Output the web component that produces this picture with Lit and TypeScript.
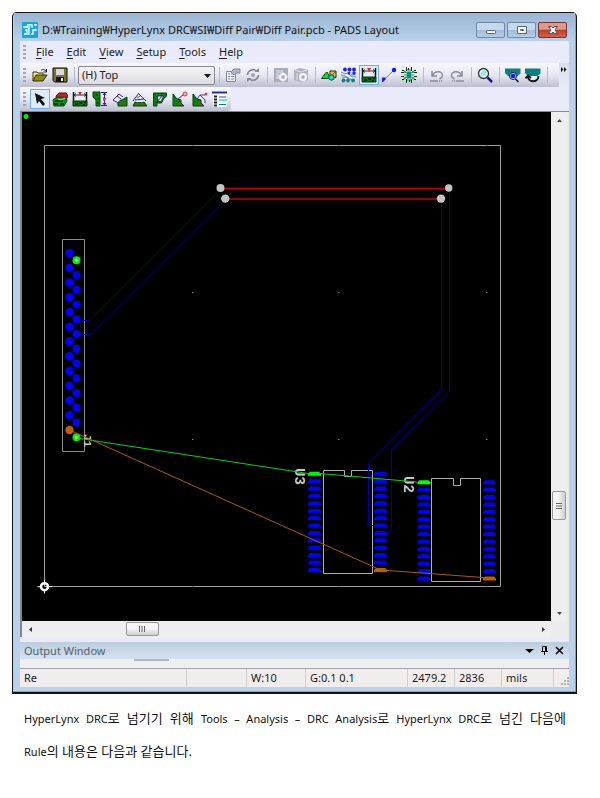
import { LitElement, html, svg, css } from "lit";
import { customElement } from "lit/decorators.js";
import { classMap } from "lit/directives/class-map.js";

/* Icons are drawn on a 16 x 16 grid. */
const icons: Record<string, unknown> = {
  logo: svg`<rect width="16" height="16" rx="1" fill="#16a8dc"/><path d="M1 5h4M3 8h2v4H2M7 3v10M5 3h5v3M9 12h2V8h3M12 3h3" stroke="#fff" stroke-width="1.3" fill="none"/><circle cx="5" cy="5" r="1.2" fill="#fff"/><circle cx="13.500" cy="8" r="1.200" fill="#fff"/>`,
  open: svg`<path d="M1 14V5h4l1 1h5v2" fill="#f4ec70" stroke="#3a3a10"/><path d="M1 14l3-6h11l-4 6z" fill="#8a8a10" stroke="#2c2c0c"/><path d="M9 3.500c2-2 4-1 5 1M14.500 2v3h-3" fill="none" stroke="#222"/>`,
  save: svg`<path d="M1 1h14v14H2.500L1 13.500z" fill="#77772a" stroke="#111"/><rect x="4" y="2" width="8" height="6" fill="#d9d9e4"/><rect x="4" y="10" width="8" height="5" fill="#111"/><rect x="9" y="11" width="2" height="3" fill="#eee"/>`,
  props: svg`<path d="M1.500 4.500h9v10h-9z" fill="#eceef4" stroke="#858a98"/><path d="M3 7h2M6 7h3M3 9.500h2M6 9.500h3M3 12h2M6 12h3" stroke="#858a98"/><path d="M6 5l3-3h6v4h-3l-3 2z" fill="#b2b6c2" stroke="#858a98"/>`,
  cycle: svg`<path d="M2.500 8a5.500 5.500 0 0 1 9-4M13.500 8a5.500 5.500 0 0 1-9 4" fill="none" stroke="#858a98" stroke-width="1.600"/><path d="M9.500 5h4.500V1zM6.500 11H2v4z" fill="#858a98"/><circle cx="8" cy="8" r="2" fill="#a2a6b2"/>`,
  gearA: svg`<rect x="1" y="1" width="14" height="14" fill="#a7abba"/><path d="M3 3h7v3H6v6H3z" fill="#c7cad5"/><circle cx="10" cy="10" r="3" fill="none" stroke="#f3f4f8" stroke-width="2"/><path d="M10 5v10M5 10h10" stroke="#f3f4f8"/><circle cx="10" cy="10" r="1.500" fill="#a7abba"/>`,
  gearB: svg`<path d="M1 3l6-2 8 2v10l-7 2-7-2z" fill="#b0b3c1"/><path d="M2 3l6 2 6-2M4 6v7" stroke="#dcdee6" fill="none"/><circle cx="10" cy="10" r="3" fill="none" stroke="#f3f4f8" stroke-width="2"/><path d="M10 6v8M6 10h8" stroke="#f3f4f8"/><circle cx="10" cy="10" r="1.500" fill="#a7abba"/>`,
  shapes: svg`<path d="M9 4h6v6.500H9z" fill="#e8d800" stroke="#222"/><path d="M9 10l6-6" stroke="#554800"/><path d="M.500 11.500L5 5.500h1.500L9 11.500z" fill="#10e010" stroke="#052"/><circle cx="10.500" cy="10.500" r="2.700" fill="#20d8e0" stroke="#044"/>`,
  net: svg`<path d="M0 5l4 2 3-1 3 3 5 1M0 8l4 1 4 3 5 1M1 11l4-1 3 1M10 8l5-1" stroke="#4aa0a0" fill="none"/><g fill="#2020f0"><circle cx="4" cy="2.500" r="1.900"/><circle cx="8.500" cy="2.500" r="1.900"/><circle cx="13" cy="2.500" r="1.900"/><circle cx="8" cy="6" r="1.500"/><circle cx="13" cy="6" r="1.700"/></g><g fill="#108080"><circle cx="2.500" cy="13.500" r="1.900"/><circle cx="7" cy="13.500" r="1.900"/><circle cx="12" cy="13.500" r="1.900"/></g>`,
  board: svg`<path d="M1 1h14v9H1z" fill="#e4f0f2"/><path d="M1.500 1v9M14.500 1v9" stroke="#111" stroke-width="1.500"/><path d="M2 4h12M2 4l2-1.500M2 4l2 1.500M14 4l-2-1.500M14 4l-2 1.500" stroke="#234" fill="none"/><path d="M6 1h4L8 5z" fill="#e22"/><path d="M1 10h14v5H1z" fill="#087008" stroke="#031"/><path d="M3 13h3M7 12h3M11 14h2M12 11h2" stroke="#021" stroke-width="1.500"/>`,
  line: svg`<path d="M3 13L13 3" stroke="#44a0a0"/><circle cx="13" cy="3" r="2.200" fill="#1818ff"/><path d="M1 15v-4.500h3.500v2L2 15z" fill="#1818ff"/>`,
  chip: svg`<path d="M3 5l3 1M3 8h3M3 11l3-1M13 5l-3 1M13 8h-3M13 11l-3-1M7 2v3M9 2v3M7 11v3M9 11v3M1 3l4 2M15 3l-4 2M1 13l4-2M15 13l-4-2" stroke="#0a9a30"/><rect x="6" y="5" width="4" height="6" fill="#108888"/><g fill="#131"><path d="M1 3h2v1H1zM0 5h3v1H0zM0 9h3v1H0zM1 12h2v1H1zM13 3h2v1h-2zM13 5h3v1h-3zM13 9h3v1h-3zM13 12h2v1h-2zM5 0h1v4H5zM10 0h1v4h-1zM5 12h1v4H5zM10 12h1v4h-1zM7 1h1v2H7zM8 13h1v2H8z"/></g>`,
  undo: svg`<path d="M3 4v5h5M3.500 8.500c2-5 10-5 10 0 0 2-2 3-3 3.500" fill="none" stroke="#858a98" stroke-width="1.400"/><path d="M1 14h8M10 14h1M12 14h1" stroke="#858a98" stroke-width="1.500"/>`,
  redo: svg`<path d="M13 4v5H8M12.500 8.500c-2-5-10-5-10 0 0 2 2 3 3 3.500" fill="none" stroke="#858a98" stroke-width="1.400"/><path d="M7 14h8M5 14h1M3 14h1" stroke="#858a98" stroke-width="1.500"/>`,
  zoom: svg`<circle cx="6.500" cy="6.500" r="5" fill="#e2fbfd" stroke="#333" stroke-width="1.300"/><path d="M4 7l4-4M5 9l4-4" stroke="#6be4ee" stroke-width="1.500"/><path d="M10.500 10.500L15 15" stroke="#14148c" stroke-width="2.500"/>`,
  viewA: svg`<path d="M0 1.500h15.500v5l-3 2.500H3L0 6z" fill="#0a8080"/><circle cx="8" cy="9" r="3.500" fill="#d8ecf8" stroke="#113"/><circle cx="8" cy="9" r="2.300" fill="#1010ff"/><path d="M10.500 12l3 3" stroke="#111" stroke-width="1.500"/>`,
  viewB: svg`<path d="M0 1.500h15.500v5l-3 2.500H3L0 6z" fill="#0a8080"/><path d="M4 9h8v2l-4 2-4-2z" fill="#eef4f8"/><path d="M3 9c0 7 10 7 10.500 0M.500 11.500L3 8.500l3 2.500" fill="none" stroke="#111" stroke-width="1.900"/>`,
  arrow: svg`<path d="M3 2l10 5-4 1 4 5-2 2-4-5-2 3z" fill="#111"/>`,
  pile: svg`<path d="M4 5l3-3h7l2 3-2 4H5z" fill="#d51c1c" stroke="#511"/><path d="M1 9l4-3h9l1 4-3 5H2z" fill="#109010" stroke="#042"/><path d="M3 10h8M2 13h4M8 13h4" stroke="#021" stroke-width="1.500"/><path d="M6 8l3 1 4-2" stroke="#8ee" fill="none"/>`,
  vdim: svg`<path d="M1 1h7v14H4V9L1 6z" fill="#0b800b" stroke="#041"/><path d="M4 4h2M5 8h2M5 12h2" stroke="#021"/><path d="M9 1.500h6M9 14.500h6M12.500 2v12M11 4l1.500-2L14 4M11 12l1.500 2 1.500-2" stroke="#2424a0" fill="none"/><path d="M11 6l4 2-4 2z" fill="#e33"/>`,
  rotA: svg`<path d="M6 15V9h4l5-3v9z" fill="#0b800b" stroke="#041"/><path d="M8 12h2M12 13h2" stroke="#d22" stroke-width="1.500"/><path d="M1 9l6-6 4 3-5 5z" fill="#e8e8ff"/><path d="M1 9l6-6M1 9l5 3M7 3l4 3M5 5l4 3" stroke="#2a2a90" fill="none"/>`,
  rotB: svg`<path d="M1 15l2-4h9l3 4z" fill="#0b800b" stroke="#041"/><path d="M4 13h2M9 13h2" stroke="#d22" stroke-width="1.500"/><path d="M3 9l4-6 6 6-2 2H4z" fill="#e8e8ff"/><path d="M1 10l6-8M7 3l7 7M3 9l9-1" stroke="#2a2a90" fill="none"/><path d="M5 7l3-2" stroke="#a33"/>`,
  poly: svg`<path d="M1.500 2h13v3l-3 3-2 4H5v3H1.500z" fill="#0b800b" stroke="#041"/><path d="M5.500 5h6l-1 3-2 2.500h-3z" fill="#f0f0ff" stroke="#2a2a90"/><path d="M4 12l7-8" stroke="#333"/>`,
  corner: svg`<path d="M1 3l4 5 4 1v3l3 3H1z" fill="#0b800b" stroke="#041"/><path d="M7 13h2" stroke="#d22" stroke-width="2"/><path d="M5 9l7-6" stroke="#226"/><circle cx="13" cy="3" r="2" fill="#f6b8b8" stroke="#e33"/>`,
  curve: svg`<path d="M1 3l4 5 4 1v3l3 3H1z" fill="#0b800b" stroke="#041"/><path d="M7 13h2" stroke="#d22" stroke-width="2"/><path d="M5 8l3-4h5M8 4l5 5v3" stroke="#3a3ab0" fill="none"/><circle cx="14" cy="3" r="1.500" fill="#e33"/>`,
  list: svg`<rect x="1" y="0" width="14" height="16" fill="#fff"/><path d="M0 1.500h15" stroke="#2a2aa0" stroke-width="2"/><path d="M2 5.500h3M2 8.500h3M2 11.500h3M2 14.500h3" stroke="#222" stroke-width="2"/><path d="M7 6h7" stroke="#44a"/><path d="M7 9h8" stroke="#4fe6ee" stroke-width="2"/><path d="M7 13.500h7" stroke="#088"/>`,
};

const icon = (name: string) =>
  html`<svg class="icon" viewBox="0 0 16 16" aria-hidden="true">${icons[name]}</svg>`;

type Tool = { icon: string; label: string; on?: boolean; off?: boolean };

const editTools: Tool[][] = [
  [{ icon: "props", label: "Properties", off: true }, { icon: "cycle", label: "Cycle", off: true }],
  [{ icon: "gearA", label: "Layer setup", off: true }, { icon: "gearB", label: "Part setup", off: true }],
  [
    { icon: "shapes", label: "Drafting" },
    { icon: "net", label: "ECO" },
    { icon: "board", label: "Dimensioning", on: true },
    { icon: "line", label: "Route" },
    { icon: "chip", label: "BGA" },
  ],
  [{ icon: "undo", label: "Undo", off: true }, { icon: "redo", label: "Redo", off: true }],
  [{ icon: "zoom", label: "Zoom" }],
  [{ icon: "viewA", label: "Board view" }, { icon: "viewB", label: "Redraw" }],
];

const dimensionTools: Tool[] = [
  { icon: "arrow", label: "Select", on: true },
  { icon: "pile", label: "Autodimension" },
  { icon: "board", label: "Horizontal" },
  { icon: "vdim", label: "Vertical" },
  { icon: "rotA", label: "Aligned" },
  { icon: "rotB", label: "Rotated" },
  { icon: "poly", label: "Angular" },
  { icon: "corner", label: "Arc" },
  { icon: "curve", label: "Leader" },
  { icon: "list", label: "Options" },
];

const toolButton = (t: Tool) => html`<button
  class=${classMap({ tool: true, on: !!t.on })} ?disabled=${!!t.off}
  aria-label=${t.label} title=${t.label}>${icon(t.icon)}</button>`;

const range = (n: number) => Array.from({ length: n }, (_, i) => i);

/* One SMD pad row: a flat-bottomed dome, 13 wide. */
const pads = (x: number, y: number, special: number, colour: string) =>
  range(14).map((i) => {
    const cy = y + i * 7.4;
    return svg`<path d="M${x} ${cy + 2.2}v-2l2-2h9l2 2v2z" fill=${i === special ? colour : "#0000ff"}/>`;
  });

@customElement("pcb-board")
export class PcbBoard extends LitElement {
  static styles = css`
    :host { display: block; background: #000; }
    svg { display: block; width: 100%; height: auto; }
    .ref { font: bold 14px "Liberation Mono", monospace; fill: #c8c8c8; }
    .ref.small { font-size: 11px; }
  `;

  render() {
    return html`<svg viewBox="22 112 529 509" role="img" aria-label="Board layout">
      <g fill="none" stroke="#8c8c8c">
        <path d="M44.500 145.500H500.500V586.500H44.500z" stroke="#a0a0a0"/>
        <path d="M62.500 239.500H84.500V451.500H62.500z"/>
        <path d="M323.500 470.500H344.500V476.500H351.500V470.500H372.500V573.500H323.500z" stroke="#b0b0b0"/>
        <path d="M431.500 478.500H453.500V485.500H460.500V478.500H480.500V581.500H431.500z" stroke="#b0b0b0"/>
      </g>
      <g fill="#777">
        ${[192, 338, 486].map((x) => [145, 292, 439, 586].map((y) =>
          svg`<rect x=${x} y=${y} width="1.500" height="1"/>`))}
      </g>
      <g fill="none" stroke="#0000a0">
        <path d="M77 320.500H89.500L221 189"/>
        <path d="M77 334.500H91L226 199.500"/>
        <path d="M449.500 190V391L391.500 449.500V530L388 533H380"/>
        <path d="M441.500 200V389.500L368.500 463V523L370 525.500H380"/>
      </g>
      <circle cx="368.500" cy="523.500" r="1.500" fill="#0000a0"/>
      <path d="M221 188.500H448M225 199H441" stroke="#c80000" stroke-width="1.500"/>
      <g fill="#c4c4c4">
        <circle cx="220.500" cy="188" r="4"/><circle cx="225.300" cy="198.600" r="4.200"/>
        <circle cx="448.700" cy="188" r="3.700"/><circle cx="441" cy="198.600" r="4.200"/>
      </g>
      ${range(13).map((i) => svg`
        <circle cx="69.500" cy=${253 + i * 14.75} r="4.200" fill=${i === 12 ? "#c06000" : "#0000ff"}/>
        <circle cx="76.500" cy=${260.3 + i * 14.75} r="4" fill=${i === 0 || i === 12 ? "#00f000" : "#0000ff"}/>`)}
      <circle cx="76.500" cy="260.300" r="1.500" fill="#c8ffc8"/>
      <circle cx="76.500" cy="437.300" r="1.500" fill="#c8ffc8"/>
      ${pads(308, 473.5, 0, "#00ff00")} ${pads(374, 473.5, 13, "#c06000")}
      ${pads(417.5, 482, 0, "#00ff00")} ${pads(483, 482, 13, "#c06000")}
      <text class="ref small" transform="translate(84 434) rotate(90)">J1</text>
      <text class="ref" transform="translate(295 468) rotate(90)">U3</text>
      <text class="ref" transform="translate(404 476) rotate(90)">U2</text>
      <path d="M76.500 438L308 473.500H320L417 482" fill="none" stroke="#00d800"/>
      <path d="M69.500 430L374 567L381 570L490 578" fill="none" stroke="#b05a00"/>
      <circle cx="26" cy="116.500" r="2.500" fill="#00f000"/>
      <circle cx="44.500" cy="586.700" r="3.500" fill="none" stroke="#fff" stroke-width="2.500"/>
      <path d="M37.500 586.700H42M47 586.700H52M44.500 580V584M44.500 589V593.500" stroke="#fff"/>
    </svg>`;
  }
}

@customElement("app-root")
export class AppRoot extends LitElement {
  static styles = css`
    :host { display: block; padding: 12px 23px 24px 12px; background: #fff;
      font: 11px/16px "Noto Sans", "Noto Sans CJK KR", sans-serif; color: #1c1c24; }
    * { box-sizing: border-box; }
    button { border: 0; padding: 0; margin: 0; background: none; font: inherit; color: inherit; }
    .icon { display: block; width: 16px; height: 16px; }
    .window { border: 1px solid #101418; border-bottom-width: 2px; border-radius: 5px 5px 0 0;
      background: #b9d1ea; padding: 0 7px 5px; box-shadow: inset -1px -1px #30c4e0; }
    .title { display: flex; align-items: center; gap: 4px; height: 28px; padding: 6px 8px 0;
      margin: 0 -6px; background: linear-gradient(#9bb5d2, #b9d1ea); }
    h1 { flex: 1; margin: 0; font: inherit; white-space: nowrap; color: #111; }
    .controls { display: flex; gap: 2px; }
    .control { display: grid; place-items: center; width: 29px; height: 16px; border: 1px solid #6f88a6;
      border-radius: 2px; background: linear-gradient(#c6d8eb 48%, #a3bbd6 50%, #b6cde6); }
    .control.close { border-color: #7c3030; background: linear-gradient(#dc9a8c 45%, #be3c28 50%, #cf6450); }
    .control svg { display: block; width: 12px; height: 10px; }
    .body { background: #e9ebfa; }
    .menu { display: flex; gap: 13px; align-items: center; height: 22px; padding-left: 3px; }
    .menu u { text-underline-offset: 2px; }
    .grip { width: 3px; height: 14px; margin-right: 4px;
      background: repeating-linear-gradient(#a4a6b6 0 2px, transparent 2px 4px); }
    .menu .grip { margin-right: -3px; }
    .bar { display: flex; align-items: center; height: 24px; padding-left: 3px;
      border-radius: 0 3px 3px 0; background: linear-gradient(#f8f8fd, #e6e7f1 50%, #bdbfd1); }
    .bar.short { width: fit-content; padding-right: 1px; }
    .tool { display: grid; place-items: center; width: 20px; height: 20px; flex: none; border: 1px solid transparent; }
    .tool.on { border-color: #6cb0f4; background: #dcecfc; }
    .sep { flex: none; width: 8px; height: 16px; background: linear-gradient(#b8bac8, #b8bac8) center / 1px 100% no-repeat; }
    .layer { position: relative; flex: 0 0 137px; }
    select { appearance: none; width: 100%; height: 19px; padding: 0 3px; border: 1px solid #85868e;
      border-radius: 2px; background: linear-gradient(#f4f4f6, #dcdce0); font: inherit; color: #222; }
    .layer svg { position: absolute; right: 4px; top: 8px; width: 7px; height: 4px; pointer-events: none; }
    .more { align-self: stretch; width: 10px; margin-left: auto; background: linear-gradient(#dcdcea, #e9ebfa);
      display: grid; justify-items: center; padding-top: 4px; }
    .more svg { width: 6px; height: 5px; }
    .work { display: grid; grid-template-columns: 1fr 16px; border: solid #85858c; border-width: 1px 0 0 2px;
      padding-right: 2px; background: #ececec; }
    .vbar, .hbar { display: flex; justify-content: space-between; background: #eeeeee; }
    .vbar { flex-direction: column; }
    .hbar { height: 16px; }
    .step { display: grid; place-items: center; width: 16px; height: 16px; }
    .step svg { width: 5px; height: 5px; }
    .track { flex: 1; display: flex; }
    .vbar .track { flex-direction: column; }
    .before-v { flex: 365; } .after-v { flex: 85; }
    .before-h { flex: 88; } .after-h { flex: 378; }
    .thumb { display: grid; place-items: center; border: 1px solid #989898; border-radius: 2px; background: linear-gradient(#f6f6f6 45%, #cfcfd2); }
    .vbar .thumb { flex: 27; margin: 0 1px; background: linear-gradient(90deg, #f6f6f6 40%, #cfcfd2); }
    .hbar .thumb { flex: 31; margin: 1px 0; }
    .thumb svg { width: 8px; height: 8px; }
    .vbar .thumb svg { transform: rotate(90deg); }
    .output { display: flex; align-items: center; height: 17px; margin-top: 5px; padding: 0 2px 0 4px;
      background: linear-gradient(#bccddd, #d4e2f0); color: #53606e; }
    .output h2 { flex: 1; margin: 0; font: inherit; }
    .output button { display: grid; place-items: center; width: 15px; height: 15px; }
    .output svg { width: 9px; height: 9px; }
    .split { height: 10px; background: #efefef; border-bottom: 1px solid #a2a2a8; }
    .split i { display: block; width: 35px; height: 2px; margin-left: 114px; background: #b6b6ba; }
    .status { display: grid; grid-template-columns: 166fr 60fr 59fr 102fr 47fr 47fr 52fr 15fr; height: 18px;
      background: #f0edec; line-height: 18px; }
    .status span { border-left: 1px solid #d2d0d0; padding-left: 4px; white-space: nowrap; }
    .status span:first-child { border: 0; }
    .dots { display: block; width: 9px; height: 9px; margin: 8px 0 0 2px; }
    p { margin: 8px 11px 0 12px; line-height: 33px; color: #111; }
    p span { display: block; }
    .full { text-align-last: justify; }
    b { font-weight: 400; font-size: 13px; }
  `;

  render() {
    const menus = ["File", "Edit", "View", "Setup", "Tools", "Help"];
    return html`
      <main>
        <section class="window">
          <header class="title">
            ${icon("logo")}
            <h1>D:₩Training₩HyperLynx DRC₩SI₩Diff Pair₩Diff Pair.pcb - PADS Layout</h1>
            <div class="controls">
              <button class="control" aria-label="Minimize"><svg viewBox="0 0 12 10"><rect x="1.500" y="5.500" width="9" height="3" rx="1" fill="#fff" stroke="#58687c"/></svg></button>
              <button class="control" aria-label="Maximize"><svg viewBox="0 0 12 10"><path d="M1.500 1.500h9v7h-9zM4.500 4.500v1h3v-1z" fill="#fff" stroke="#58687c" fill-rule="evenodd"/></svg></button>
              <button class="control close" aria-label="Close"><svg viewBox="0 0 12 10"><path d="M1.500 1.500h3L6 3l1.500-1.500h3L8 5l2.500 3.500h-3L6 7 4.500 8.500h-3L4 5z" fill="#fff" stroke="#684048"/></svg></button>
            </div>
          </header>
          <div class="body">
            <nav class="menu">
              <span class="grip"></span>
              ${menus.map((m) => html`<button><u>${m[0]}</u>${m.slice(1)}</button>`)}
            </nav>
            <div class="bar main">
              <span class="grip"></span>
              ${toolButton({ icon: "open", label: "Open" })}${toolButton({ icon: "save", label: "Save" })}
              <span class="sep"></span>
              <div class="layer">
                <select aria-label="Layer"><option>(H) Top</option></select>
                <svg viewBox="0 0 7 4" aria-hidden="true"><path d="M0 0h7L3.500 4z" fill="#111"/></svg>
              </div>
              ${editTools.map((g) => html`<span class="sep"></span>${g.map(toolButton)}`)}
              <span class="sep"></span>
              <button class="more" aria-label="More tools"><svg viewBox="0 0 6 5"><path d="M0 0l2.500 2.500L0 5zM3 0l2.500 2.500L3 5z" fill="#111"/></svg></button>
            </div>
            <div class="bar short">
              <span class="grip"></span>
              ${dimensionTools.map(toolButton)}
            </div>
            <div class="work">
              <pcb-board></pcb-board>
              <div class="vbar">
                <button class="step" aria-label="Scroll up"><svg viewBox="0 0 5 5"><path d="M0 4h5L2.500 1z" fill="#444"/></svg></button>
                <div class="track"><span class="before-v"></span><div class="thumb"><svg viewBox="0 0 8 8"><path d="M1.500 1v6M4 1v6M6.500 1v6" stroke="#666"/></svg></div><span class="after-v"></span></div>
                <button class="step" aria-label="Scroll down"><svg viewBox="0 0 5 5"><path d="M0 1h5L2.500 4z" fill="#444"/></svg></button>
              </div>
              <div class="hbar">
                <button class="step" aria-label="Scroll left"><svg viewBox="0 0 5 5"><path d="M4 0v5L1 2.500z" fill="#333"/></svg></button>
                <div class="track"><span class="before-h"></span><div class="thumb"><svg viewBox="0 0 8 8"><path d="M1.500 1v6M4 1v6M6.500 1v6" stroke="#666"/></svg></div><span class="after-h"></span></div>
                <button class="step" aria-label="Scroll right"><svg viewBox="0 0 5 5"><path d="M1 0v5l3-2.500z" fill="#333"/></svg></button>
              </div>
            </div>
            <div class="output">
              <h2>Output Window</h2>
              <button aria-label="Window menu"><svg viewBox="0 0 9 9"><path d="M0 3h9L4.500 7z" fill="#000"/></svg></button>
              <button aria-label="Pin"><svg viewBox="0 0 9 9"><path d="M2.500 5.500v-5h4v5M1 5.500h7M4.500 6v3M5.500 1v4" fill="none" stroke="#000"/></svg></button>
              <button aria-label="Close output"><svg viewBox="0 0 9 9"><path d="M1 1l7 7M8 1L1 8" stroke="#000" stroke-width="1.600"/></svg></button>
            </div>
            <div class="split"><i></i></div>
            <footer class="status">
              <span>Re</span><span></span><span>W:10</span><span>G:0.1 0.1</span>
              <span>2479.2</span><span>2836</span><span>mils</span>
              <span><svg class="dots" viewBox="0 0 9 9"><path d="M7 1h2M4 4h2M7 4h2M1 7h2M4 7h2M7 7h2" stroke="#b4b2b2" stroke-width="2"/></svg></span>
            </footer>
          </div>
        </section>
        <p lang="ko">
          <span class="full">HyperLynx DRC<b>로 넘기기 위해 </b>Tools – Analysis – DRC Analysis<b>로 </b>HyperLynx DRC<b>로 넘긴 다음에</b></span>
          <span>Rule<b>의 내용은 다음과 같습니다.</b></span>
        </p>
      </main>
    `;
  }
}
